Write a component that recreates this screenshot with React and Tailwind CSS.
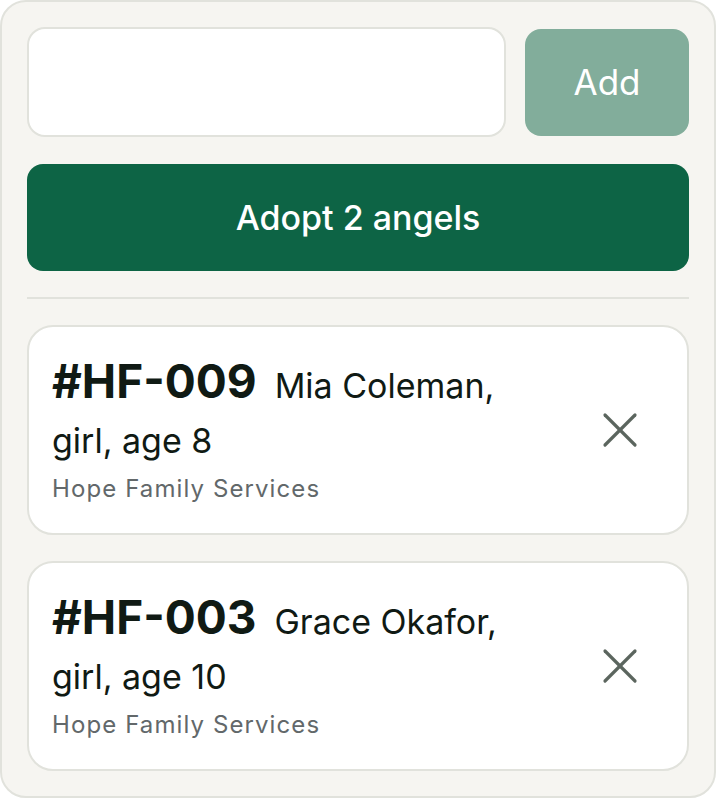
import React from 'react';

const angels = [
    { id: '#HF-009', name: 'Mia Coleman', detail: 'girl, age 8', agency: 'Hope Family Services' },
    { id: '#HF-003', name: 'Grace Okafor', detail: 'girl, age 10', agency: 'Hope Family Services' },
];

const XIcon = () => (
    <svg width="36" height="36" viewBox="0 0 36 36" fill="none" stroke="#5b655e" strokeWidth="3.2" strokeLinecap="round">
        <path d="M3 3 33 33" />
        <path d="M33 3 3 33" />
    </svg>
);

const AngelCard = ({ angel }) => (
    <div className="h-[210px] shrink-0 bg-white border-2 border-[#e1e2dc] rounded-[26px] pl-[23px] pr-[35px] flex items-center gap-4">
        <div className="flex-1 min-w-0 pr-[60px] pb-[1px]">
            <p className="text-[34px] leading-[55px] text-[#101a14]">
                <span className="text-[46px] font-bold mr-[18px]">{angel.id}</span>
                {angel.name}, {angel.detail}
            </p>
            <p className="text-[24px] leading-[34px] tracking-[1.1px] text-[#62686a] mt-[4px]">{angel.agency}</p>
        </div>
        <button className="w-[64px] h-[64px] flex items-center justify-center shrink-0">
            <XIcon />
        </button>
    </div>
);

export default function App() {
    return (
        <div className="h-[798px] w-[716px] bg-[#f6f5f1] border-2 border-[#e1e2dc] rounded-[26px] px-[25px] pt-[25px] flex flex-col gap-[26px] overflow-hidden" style={{ fontFamily: 'Inter, "Noto Sans", sans-serif' }}>
            <div className="flex items-center gap-[19px] shrink-0 mb-px">
                <input className="flex-1 min-w-0 h-[110px] bg-white border-2 border-[#e1e2dc] rounded-[18px] outline-none px-5 text-[30px]" />
                <button className="w-[164px] h-[107px] shrink-0 bg-[#82ad9b] rounded-[16px] text-white text-[35px]">Add</button>
            </div>
            <button className="h-[107px] shrink-0 bg-[#0d6445] rounded-[16px] text-white text-[34px] font-medium">Adopt 2 angels</button>
            <div className="h-[2px] shrink-0 bg-[#e1e2dc]" />
            {angels.map((a) => (
                <AngelCard key={a.id} angel={a} />
            ))}
        </div>
    );
}
